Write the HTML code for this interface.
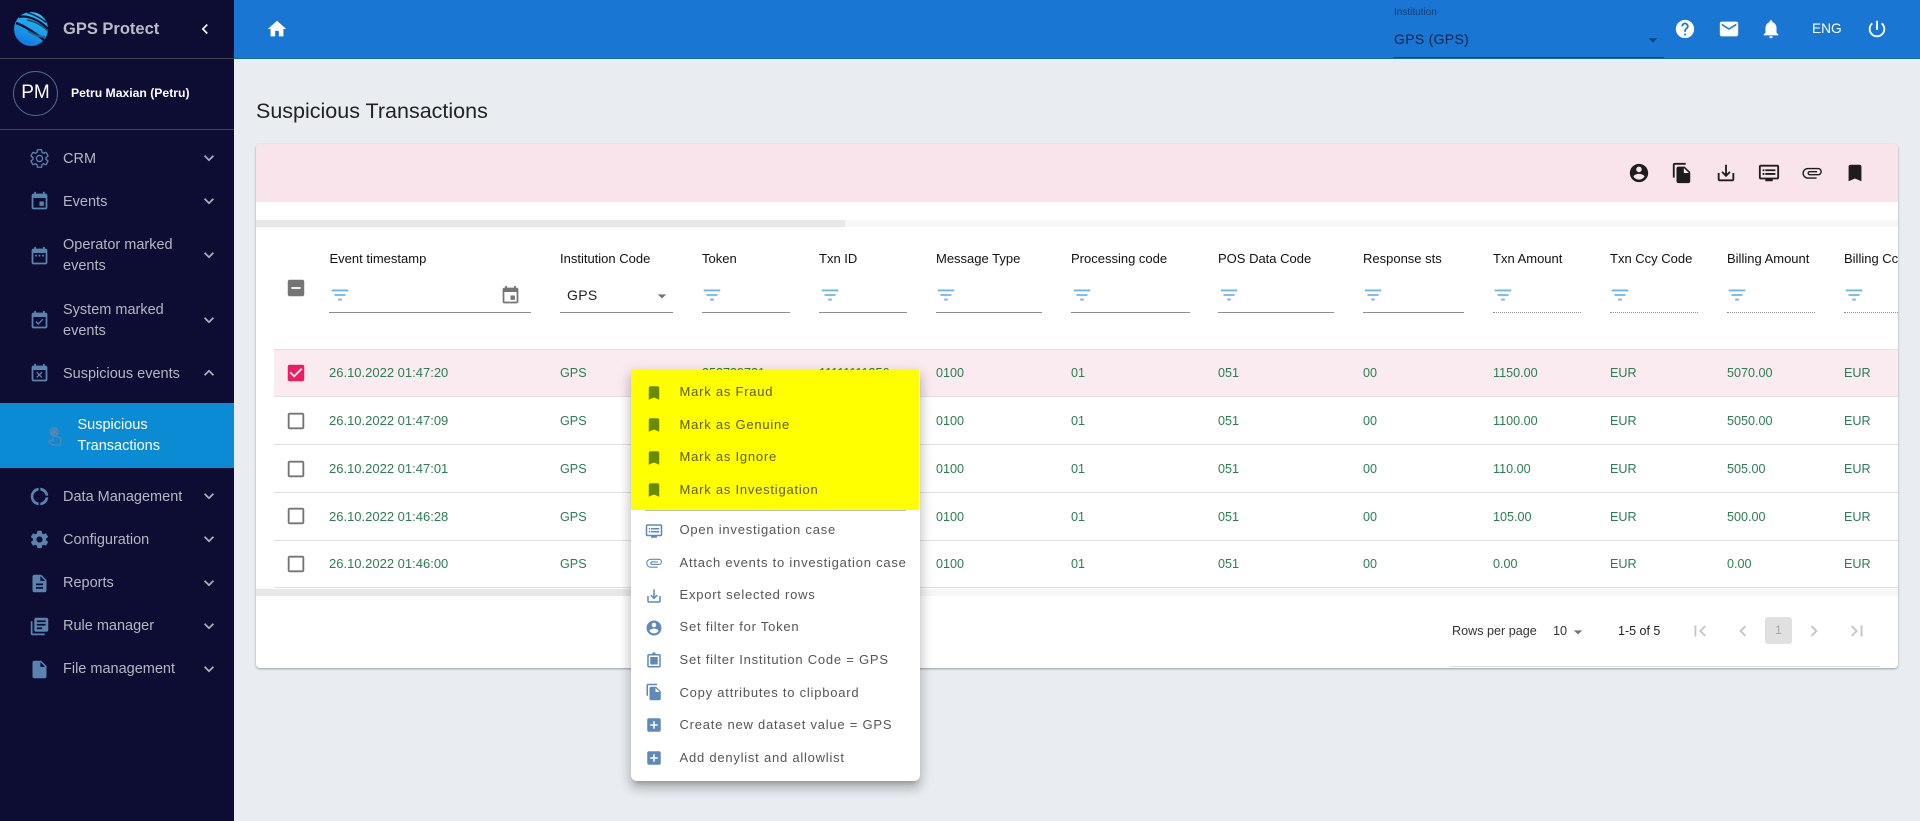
<!DOCTYPE html>
<html><head><meta charset="utf-8"><title>Suspicious Transactions</title>
<style>
*{box-sizing:border-box}
html,body{margin:0;padding:0}
body{width:1920px;height:821px;overflow:hidden;position:relative;background:#e9edf1;font-family:"Liberation Sans",sans-serif;color:#222}
.a{position:absolute}
.t{position:absolute;white-space:nowrap;line-height:16px}
svg{display:block;fill:currentColor}
#side{left:0;top:0;width:234px;height:821px;background:#0d0d33}
#top{left:234px;top:0;width:1686px;height:59px;background:#1976d2;border-bottom:1px solid #0e6ea8}
.hr{left:0;width:234px;height:1px;background:#45454f}
.ni{position:absolute;left:28.500px;width:21px;height:21px;color:#5a84ae}
.nt{position:absolute;left:63px;font-size:14.500px;line-height:21px;color:#b5b6c2;white-space:nowrap}
.nc{position:absolute;left:199px;width:20px;height:20px;color:#b0b0bb}
#card{left:256px;top:144px;width:1642px;height:524px;background:#fff;border-radius:4px;box-shadow:0 1px 2px rgba(0,0,0,.35);overflow:hidden}
.h{position:absolute;top:252px;font-size:13px;line-height:14px;color:#111;white-space:nowrap}
.u{position:absolute;top:312px;height:1px;background:#8f8f8f}
.d{position:absolute;top:312px;height:1px;border-top:1px dotted #8f8f8f}
.f{position:absolute;top:284px;width:22px;height:22px;color:#6db6e6}
.row{position:absolute;left:274px;width:1624px;height:48px;border-bottom:1px solid #e0e0e0;overflow:hidden}
.c{position:absolute;top:16px;font-size:12.600px;line-height:16px;color:#2a7d55;white-space:nowrap}
.r1 .c{top:15px}
.c1{left:55px;font-size:13px}.c2{left:286px}.c3{left:428px}.c4{left:545px}.c5{left:662px}.c6{left:797px}.c7{left:944px}.c8{left:1089px}.c9{left:1219px}.c10{left:1336px}.c11{left:1453px}.c12{left:1570px}
.cb{position:absolute;left:285px;width:22px;height:22px;color:#757575}
.ti{position:absolute;top:162px;width:22px;height:22px;color:#1d1d1d}
#menu{left:631px;top:370px;width:289px;height:411px;background:#fff;border-radius:0 0 6px 6px;box-shadow:0 5px 5px -3px rgba(0,0,0,.2),0 8px 10px 1px rgba(0,0,0,.14),0 3px 14px 2px rgba(0,0,0,.12)}
.mi{position:absolute;left:14px;width:18px;height:18px;color:#5f8ab6}
.mt{position:absolute;left:48.500px;font-size:13px;line-height:16px;letter-spacing:.77px;color:#555;white-space:nowrap}
.y .mi{color:#6b8a00}.y .mt{color:#5c5c12}
.pg{position:absolute;top:620px;width:22px;height:22px;color:#c4c4c4}
.wi{position:absolute;top:18px;width:22px;height:22px;color:#fff}
</style></head><body>
<svg width="0" height="0" style="position:absolute">
<symbol id="i-more" viewBox="0 0 24 24"><path d="M16.590 8.590L12 13.170 7.410 8.590 6 10l6 6 6-6z"/></symbol>
<symbol id="i-less" viewBox="0 0 24 24"><path d="M12 8l-6 6 1.410 1.410L12 10.830l4.590 4.580L18 14z"/></symbol>
<symbol id="i-filter" viewBox="0 0 24 24"><path d="M10 18h4v-2h-4v2zM3 6v2h18V6H3zm3 7h12v-2H6v2z"/></symbol>
<symbol id="i-box" viewBox="0 0 24 24"><path d="M19 5v14H5V5h14m0-2H5c-1.100 0-2 .9-2 2v14c0 1.100.9 2 2 2h14c1.100 0 2-.9 2-2V5c0-1.100-.9-2-2-2z"/></symbol>
<symbol id="i-book" viewBox="0 0 24 24"><path d="M17 3H7c-1.100 0-1.990.9-1.990 2L5 21l7-3 7 3V5c0-1.100-.9-2-2-2z"/></symbol>
<symbol id="i-add" viewBox="0 0 24 24"><path d="M19 3H5c-1.110 0-2 .9-2 2v14c0 1.100.89 2 2 2h14c1.100 0 2-.9 2-2V5c0-1.100-.9-2-2-2zm-2 10h-4v4h-2v-4H7v-2h4V7h2v4h4v2z"/></symbol>
<symbol id="i-acc" viewBox="0 0 24 24"><path d="M12 2C6.480 2 2 6.480 2 12s4.480 10 10 10 10-4.480 10-10S17.520 2 12 2zm0 3c1.660 0 3 1.340 3 3s-1.340 3-3 3-3-1.340-3-3 1.340-3 3-3zm0 14.200c-2.500 0-4.710-1.280-6-3.220.03-1.990 4-3.080 6-3.080 1.990 0 5.970 1.090 6 3.080-1.290 1.940-3.500 3.220-6 3.220z"/></symbol>
<symbol id="i-copy" viewBox="0 0 24 24"><path d="M16 1H4c-1.100 0-2 .9-2 2v14h2V3h12V1zm-1 4l6 6v10c0 1.100-.9 2-2 2H7.990C6.890 23 6 22.100 6 21l.01-14c0-1.100.89-2 1.990-2h7zm-1 7h5.500L14 6.500V12z"/></symbol>
<symbol id="i-down" viewBox="0 0 24 24"><path d="M19 12v7H5v-7H3v7c0 1.100.9 2 2 2h14c1.100 0 2-.9 2-2v-7h-2zm-6 .670l2.590-2.580L17 11.500l-5 5-5-5 1.410-1.410L11 12.670V3h2z"/></symbol>
<symbol id="i-dvr" viewBox="0 0 24 24"><path d="M21 3H3c-1.100 0-2 .9-2 2v12c0 1.100.9 2 2 2h5v2h8v-2h5c1.100 0 1.990-.9 1.990-2L23 5c0-1.100-.9-2-2-2zm0 14H3V5h18v12zm-2-9H8v2h11V8zm0 4H8v2h11v-2zM7 8H5v2h2V8zm0 4H5v2h2v-2z"/></symbol>
<symbol id="i-att" viewBox="0 0 24 24"><path fill="none" stroke="currentColor" stroke-width="1.500" d="M17 17.500H7.500a5.200 5.200 0 0 1 0-10.400H18.600a3.400 3.400 0 0 1 0 6.800H9.500a1.700 1.700 0 0 1 0-3.400H17.500"/></symbol>
<symbol id="i-gear" viewBox="0 0 24 24"><path d="M19.430 12.980c.04-.32.07-.64.07-.98 0-.34-.03-.66-.07-.98l2.110-1.650c.19-.15.24-.42.12-.64l-2-3.460c-.12-.22-.39-.3-.61-.22l-2.490 1c-.52-.4-1.080-.73-1.690-.98l-.38-2.650C14.460 2.180 14.250 2 14 2h-4c-.25 0-.46.18-.49.42l-.38 2.650c-.61.25-1.170.59-1.690.98l-2.490-1c-.23-.09-.49 0-.61.22l-2 3.460c-.13.22-.07.49.12.64l2.110 1.650c-.04.32-.07.65-.07.98 0 .33.03.66.07.98l-2.110 1.650c-.19.15-.24.42-.12.64l2 3.460c.12.22.39.3.61.22l2.490-1c.52.4 1.080.73 1.690.98l.38 2.650c.03.24.24.42.49.42h4c.25 0 .46-.18.49-.42l.38-2.650c.61-.25 1.170-.59 1.690-.98l2.490 1c.23.09.49 0 .61-.22l2-3.460c.12-.22.07-.49-.12-.64l-2.110-1.650zM12 15.500c-1.930 0-3.500-1.570-3.500-3.500s1.570-3.500 3.500-3.500 3.500 1.570 3.500 3.500-1.570 3.500-3.500 3.500z"/></symbol>
</svg>

<div id="top" class="a"></div>
<svg class="a" style="left:266px;top:18px;color:#fff" width="22" height="22" viewBox="0 0 24 24"><path d="M10 20v-6h4v6h5v-8h3L12 3 2 12h3v8z"/></svg>
<div class="t" style="left:1394px;top:6px;font-size:10px;line-height:14px;color:#123f6e">Institution</div>
<div class="t" style="left:1394px;top:31px;font-size:14px;letter-spacing:.3px;color:#0a2448">GPS (GPS)</div>
<div class="a" style="left:1394px;top:57px;width:270px;height:1px;background:#123f6e"></div>
<svg class="a" style="left:1643px;top:30px;color:#123f6e" width="20" height="20" viewBox="0 0 24 24"><path d="M7 10l5 5 5-5z"/></svg>
<svg class="wi" style="left:1674px" viewBox="0 0 24 24"><path d="M12 2C6.480 2 2 6.480 2 12s4.480 10 10 10 10-4.480 10-10S17.520 2 12 2zm1 17h-2v-2h2v2zm2.070-7.750l-.9.92C13.450 12.900 13 13.500 13 15h-2v-.5c0-1.100.45-2.100 1.170-2.830l1.240-1.260c.37-.36.59-.86.59-1.410 0-1.100-.9-2-2-2s-2 .9-2 2H8c0-2.210 1.790-4 4-4s4 1.790 4 4c0 .88-.36 1.680-.93 2.250z"/></svg>
<svg class="wi" style="left:1718px" viewBox="0 0 24 24"><path d="M20 4H4c-1.100 0-1.990.9-1.990 2L2 18c0 1.100.9 2 2 2h16c1.100 0 2-.9 2-2V6c0-1.100-.9-2-2-2zm0 4l-8 5-8-5V6l8 5 8-5v2z"/></svg>
<svg class="wi" style="left:1760px" viewBox="0 0 24 24"><path d="M12 22c1.100 0 2-.9 2-2h-4c0 1.100.89 2 2 2zm6-6v-5c0-3.070-1.640-5.640-4.500-6.320V4c0-.83-.67-1.500-1.500-1.500s-1.500.67-1.500 1.500v.68C7.630 5.360 6 7.920 6 11v5l-2 2v1h16v-1l-2-2z"/></svg>
<div class="t" style="left:1812px;top:21px;font-size:13.700px;color:#fff">ENG</div>
<svg class="wi" style="left:1866px" viewBox="0 0 24 24"><path d="M13 3h-2v10h2V3zm4.830 2.170l-1.420 1.420C17.990 7.860 19 9.810 19 12c0 3.870-3.130 7-7 7s-7-3.130-7-7c0-2.190 1.010-4.140 2.580-5.420L6.170 5.170C4.230 6.820 3 9.260 3 12c0 4.970 4.030 9 9 9s9-4.030 9-9c0-2.740-1.230-5.180-3.170-6.830z"/></svg>

<div id="side" class="a">
<svg class="a" style="left:13px;top:11px" width="36" height="36" viewBox="0 0 36 36">
<defs><linearGradient id="lg" x1="0.7" y1="0" x2="0.3" y2="1"><stop offset="0" stop-color="#2ac4f7"/><stop offset="1" stop-color="#0e78dc"/></linearGradient></defs>
<circle cx="18" cy="18" r="17" fill="url(#lg)"/>
<path d="M6 6 C14 4 27 9 35 18" fill="none" stroke="#0d0d33" stroke-width="2.200"/>
<path d="M14 1.500 C20 3 28 7 33 11.500" fill="none" stroke="#0d0d33" stroke-width="1.300"/>
<path d="M14 9 C21 10 29 14 35 20" fill="none" stroke="#1f4f70" stroke-width="1.800"/>
<path d="M3 12 C12 15 22 22 31 29" fill="none" stroke="#0d0d33" stroke-width="2.400"/>
<path d="M15 20 C20 23 25 26 32 26" fill="none" stroke="#2a5f86" stroke-width="2"/>
<path d="M23 35 C27 33.500 30 31 32.500 28 L36 36 Z" fill="#0d0d33"/>
</svg>
<div class="t" style="left:63px;top:20.500px;font-size:16.500px;font-weight:bold;color:#bcbcc6">GPS Protect</div>
<svg class="a" style="left:195px;top:19px;color:#fff" width="20" height="20" viewBox="0 0 24 24"><path d="M15.410 7.410L14 6l-6 6 6 6 1.410-1.410L10.830 12z"/></svg>
<div class="a hr" style="top:58px"></div>
<div class="a" style="left:13px;top:71px;width:45px;height:45px;border:1px solid #4d6a88;border-radius:50%"></div>
<div class="t" style="left:13px;top:82px;width:45px;text-align:center;line-height:22px;font-size:19px;color:#fff">PM</div>
<div class="t" style="left:71px;top:85px;font-size:12.200px;font-weight:bold;color:#fff">Petru Maxian (Petru)</div>
<div class="a hr" style="top:129px"></div>

<svg class="ni" style="top:147.500px" viewBox="0 0 24 24"><use href="#i-gear" fill="none" stroke="currentColor" stroke-width="1.500"/></svg>
<div class="nt" style="top:149px">CRM</div><svg class="nc" style="top:148px"><use href="#i-more"/></svg>

<svg class="ni" style="top:190.500px" viewBox="0 0 24 24"><path d="M17 12h-5v5h5v-5zM16 1v2H8V1H6v2H5c-1.110 0-1.990.9-1.990 2L3 19c0 1.100.89 2 2 2h14c1.100 0 2-.9 2-2V5c0-1.100-.9-2-2-2h-1V1h-2zm3 18H5V8h14v11z"/></svg>
<div class="nt" style="top:192px">Events</div><svg class="nc" style="top:191px"><use href="#i-more"/></svg>

<svg class="ni" style="top:245.500px" viewBox="0 0 24 24"><path d="M9 10H7v2h2v-2zm4 0h-2v2h2v-2zm4 0h-2v2h2v-2zm2-7h-1V1h-2v2H8V1H6v2H5c-1.110 0-1.990.9-1.990 2L3 19c0 1.100.89 2 2 2h14c1.100 0 2-.9 2-2V5c0-1.100-.9-2-2-2zm0 16H5V8h14v11z"/></svg>
<div class="nt" style="top:235px">Operator marked<br>events</div><svg class="nc" style="top:245px"><use href="#i-more"/></svg>

<svg class="ni" style="top:309.500px" viewBox="0 0 24 24"><path d="M16.530 11.060L15.470 10l-4.880 4.880-2.120-2.120-1.060 1.060L10.590 17l5.940-5.940zM19 3h-1V1h-2v2H8V1H6v2H5c-1.110 0-1.990.9-1.990 2L3 19c0 1.100.89 2 2 2h14c1.100 0 2-.9 2-2V5c0-1.100-.9-2-2-2zm0 16H5V8h14v11z"/></svg>
<div class="nt" style="top:300px">System marked<br>events</div><svg class="nc" style="top:310px"><use href="#i-more"/></svg>

<svg class="ni" style="top:362.500px" viewBox="0 0 24 24"><path d="M9.310 17l2.440-2.440L14.190 17l1.060-1.060-2.440-2.440 2.440-2.440L14.190 10l-2.440 2.440L9.310 10l-1.060 1.060 2.440 2.440-2.440 2.440L9.310 17zM19 3h-1V1h-2v2H8V1H6v2H5c-1.110 0-1.990.9-1.990 2L3 19c0 1.100.89 2 2 2h14c1.100 0 2-.9 2-2V5c0-1.100-.9-2-2-2zm0 16H5V8h14v11z"/></svg>
<div class="nt" style="top:364px">Suspicious events</div><svg class="nc" style="top:363px"><use href="#i-less"/></svg>

<div class="a" style="left:0;top:403px;width:234px;height:65px;background:#0a8bd3"></div>
<svg class="a" style="left:43.500px;top:424.500px;color:#4f87b5" width="21" height="21" viewBox="0 0 24 24"><path fill="none" stroke="currentColor" stroke-width="1.700" d="M9 11.240V7.500a2.500 2.500 0 0 1 5 0v3.740c1.210-.81 2-2.180 2-3.740a4.500 4.500 0 0 0-9 0c0 1.560.79 2.930 2 3.740zM11.500 6.500c-.6 0-1 .5-1 1v10.700l-3.900-.7-1.400 1.200 4.400 4.300h7.600c.7 0 1.200-.5 1.300-1.200l.8-5.300c.1-.7-.3-1.300-.9-1.600l-4.500-2.200h-1.900V7.500c0-.5-.4-1-1-1z"/></svg>
<div class="nt" style="left:77.500px;top:415px;color:#fff">Suspicious<br>Transactions</div>

<svg class="ni" style="top:486px" viewBox="0 0 24 24"><path d="M11 5.080V2c-5 .5-9 4.810-9 10s4 9.500 9 10v-3.080c-3-.48-6-3.190-6-6.920s3-6.440 6-6.920zM18.970 11H22c-.47-5-4-8.530-9-9v3.080C16 5.510 18.540 8 18.970 11zM13 18.920V22c5-.47 8.530-4 9-9h-3.030c-.43 3-2.970 5.490-5.970 5.920z"/></svg>
<div class="nt" style="top:487px">Data Management</div><svg class="nc" style="top:486px"><use href="#i-more"/></svg>

<svg class="ni" style="top:529px" viewBox="0 0 24 24"><use href="#i-gear"/></svg>
<div class="nt" style="top:530px">Configuration</div><svg class="nc" style="top:529px"><use href="#i-more"/></svg>

<svg class="ni" style="top:572.500px" viewBox="0 0 24 24"><path d="M14 2H6c-1.100 0-1.990.9-1.990 2L4 20c0 1.100.89 2 1.990 2H18c1.100 0 2-.9 2-2V8l-6-6zm2 16H8v-2h8v2zm0-4H8v-2h8v2zm-3-5V3.500L18.500 9H13z"/></svg>
<div class="nt" style="top:573px">Reports</div><svg class="nc" style="top:573px"><use href="#i-more"/></svg>

<svg class="ni" style="top:615.500px" viewBox="0 0 24 24"><path d="M4 6H2v14c0 1.100.9 2 2 2h14v-2H4V6zm16-4H8c-1.100 0-2 .9-2 2v12c0 1.100.9 2 2 2h12c1.100 0 2-.9 2-2V4c0-1.100-.9-2-2-2zm-1 9H9V9h10v2zm-4 4H9v-2h6v2zm4-8H9V5h10v2z"/></svg>
<div class="nt" style="top:616px">Rule manager</div><svg class="nc" style="top:616px"><use href="#i-more"/></svg>

<svg class="ni" style="top:658.500px" viewBox="0 0 24 24"><path d="M6 2c-1.100 0-1.990.9-1.990 2L4 20c0 1.100.89 2 1.990 2H18c1.100 0 2-.9 2-2V8l-6-6H6zm7 7V3.500L18.500 9H13z"/></svg>
<div class="nt" style="top:659px">File management</div><svg class="nc" style="top:659px"><use href="#i-more"/></svg>
</div>

<div class="t" style="left:256px;top:97.500px;font-size:21.500px;line-height:26px;color:#222">Suspicious Transactions</div>

<div id="card" class="a"></div>
<div class="a" style="left:256px;top:144px;width:1642px;height:58px;background:#f9e4ec;border-radius:4px 4px 0 0"></div>
<svg class="ti" style="left:1628px"><use href="#i-acc"/></svg>
<svg class="ti" style="left:1671px"><use href="#i-copy"/></svg>
<svg class="ti" style="left:1715px"><use href="#i-down"/></svg>
<svg class="ti" style="left:1758px"><use href="#i-dvr"/></svg>
<svg class="ti" style="left:1801px"><use href="#i-att"/></svg>
<svg class="ti" style="left:1844px"><use href="#i-book"/></svg>

<div class="a" style="left:256px;top:220px;width:1642px;height:7px;background:#f7f7f7"></div>
<div class="a" style="left:256px;top:220px;width:589px;height:7px;background:#e8e8e8"></div>

<svg class="cb" style="top:277px" viewBox="0 0 24 24"><path d="M19 3H5c-1.100 0-2 .9-2 2v14c0 1.100.9 2 2 2h14c1.100 0 2-.9 2-2V5c0-1.100-.9-2-2-2zm-2 10H7v-2h10v2z"/></svg>

<div class="h" style="left:329.500px">Event timestamp</div>
<div class="h" style="left:560px">Institution Code</div>
<div class="h" style="left:702px">Token</div>
<div class="h" style="left:819px">Txn ID</div>
<div class="h" style="left:936px">Message Type</div>
<div class="h" style="left:1071px">Processing code</div>
<div class="h" style="left:1218px">POS Data Code</div>
<div class="h" style="left:1363px">Response sts</div>
<div class="h" style="left:1493px">Txn Amount</div>
<div class="h" style="left:1610px">Txn Ccy Code</div>
<div class="h" style="left:1727px">Billing Amount</div>
<div class="h" style="width:54px;overflow:hidden;left:1844px">Billing Ccy Code</div>

<svg class="f" style="left:329px"><use href="#i-filter"/></svg>
<svg class="f" style="left:701px"><use href="#i-filter"/></svg>
<svg class="f" style="left:818.500px"><use href="#i-filter"/></svg>
<svg class="f" style="left:935px"><use href="#i-filter"/></svg>
<svg class="f" style="left:1071px"><use href="#i-filter"/></svg>
<svg class="f" style="left:1218px"><use href="#i-filter"/></svg>
<svg class="f" style="left:1362px"><use href="#i-filter"/></svg>
<svg class="f" style="left:1492px"><use href="#i-filter"/></svg>
<svg class="f" style="left:1609px"><use href="#i-filter"/></svg>
<svg class="f" style="left:1726px"><use href="#i-filter"/></svg>
<svg class="f" style="left:1843px"><use href="#i-filter"/></svg>

<svg class="a" style="left:499.500px;top:284.500px;color:#757575" width="21" height="21" viewBox="0 0 24 24"><path d="M17 12h-5v5h5v-5zM16 1v2H8V1H6v2H5c-1.110 0-1.990.9-1.990 2L3 19c0 1.100.89 2 2 2h14c1.100 0 2-.9 2-2V5c0-1.100-.9-2-2-2h-1V1h-2zm3 18H5V8h14v11z"/></svg>
<div class="t" style="left:567px;top:287px;font-size:14px;letter-spacing:.3px;color:#222">GPS</div>
<svg class="a" style="left:652px;top:286px;color:#757575" width="20" height="20" viewBox="0 0 24 24"><path d="M7 10l5 5 5-5z"/></svg>

<div class="u" style="left:329px;width:202px"></div>
<div class="u" style="left:560px;width:113px"></div>
<div class="u" style="left:702px;width:88px"></div>
<div class="u" style="left:819px;width:88px"></div>
<div class="u" style="left:936px;width:106px"></div>
<div class="u" style="left:1071px;width:119px"></div>
<div class="u" style="left:1218px;width:116px"></div>
<div class="u" style="left:1363px;width:101px"></div>
<div class="d" style="left:1493px;width:88px"></div>
<div class="d" style="left:1610px;width:88px"></div>
<div class="d" style="left:1727px;width:88px"></div>
<div class="d" style="left:1844px;width:54px"></div>

<div class="a" style="left:274px;top:349px;width:1624px;height:1px;background:#e0e0e0"></div>
<div class="row r1" style="top:350px;height:47px;background:#faebf0">
<span class="c c1">26.10.2022 01:47:20</span><span class="c c2">GPS</span><span class="c c3">352739731</span><span class="c c4">11111111356</span><span class="c c5">0100</span><span class="c c6">01</span><span class="c c7">051</span><span class="c c8">00</span><span class="c c9">1150.00</span><span class="c c10">EUR</span><span class="c c11">5070.00</span><span class="c c12">EUR</span></div>
<div class="row" style="top:397px">
<span class="c c1">26.10.2022 01:47:09</span><span class="c c2">GPS</span><span class="c c5">0100</span><span class="c c6">01</span><span class="c c7">051</span><span class="c c8">00</span><span class="c c9">1100.00</span><span class="c c10">EUR</span><span class="c c11">5050.00</span><span class="c c12">EUR</span></div>
<div class="row" style="top:445px">
<span class="c c1">26.10.2022 01:47:01</span><span class="c c2">GPS</span><span class="c c5">0100</span><span class="c c6">01</span><span class="c c7">051</span><span class="c c8">00</span><span class="c c9">110.00</span><span class="c c10">EUR</span><span class="c c11">505.00</span><span class="c c12">EUR</span></div>
<div class="row" style="top:493px">
<span class="c c1">26.10.2022 01:46:28</span><span class="c c2">GPS</span><span class="c c5">0100</span><span class="c c6">01</span><span class="c c7">051</span><span class="c c8">00</span><span class="c c9">105.00</span><span class="c c10">EUR</span><span class="c c11">500.00</span><span class="c c12">EUR</span></div>
<div class="row" style="top:540px">
<span class="c c1">26.10.2022 01:46:00</span><span class="c c2">GPS</span><span class="c c5">0100</span><span class="c c6">01</span><span class="c c7">051</span><span class="c c8">00</span><span class="c c9">0.00</span><span class="c c10">EUR</span><span class="c c11">0.00</span><span class="c c12">EUR</span></div>

<svg class="cb" style="top:362px;color:#e91e63" viewBox="0 0 24 24"><path d="M19 3H5c-1.100 0-2 .9-2 2v14c0 1.100.9 2 2 2h14c1.100 0 2-.9 2-2V5c0-1.100-.9-2-2-2zm-9 14l-5-5 1.410-1.410L10 14.170l7.590-7.590L19 8l-9 9z"/></svg>
<svg class="cb" style="top:410px"><use href="#i-box"/></svg>
<svg class="cb" style="top:458px"><use href="#i-box"/></svg>
<svg class="cb" style="top:505px"><use href="#i-box"/></svg>
<svg class="cb" style="top:553px"><use href="#i-box"/></svg>

<div class="a" style="left:256px;top:589px;width:1642px;height:7px;background:#f7f7f7"></div>
<div class="a" style="left:256px;top:589px;width:376px;height:7px;background:#e8e8e8"></div>

<div class="t" style="left:1452px;top:623px;font-size:12.600px;color:#333">Rows per page</div>
<div class="t" style="left:1553px;top:623px;font-size:12.700px;color:#333">10</div>
<svg class="a" style="left:1567.500px;top:622px;color:#757575" width="20" height="20" viewBox="0 0 24 24"><path d="M7 10l5 5 5-5z"/></svg>
<div class="t" style="left:1618px;top:623px;font-size:12.500px;color:#222">1-5 of 5</div>
<svg class="pg" style="left:1689px" viewBox="0 0 24 24"><path d="M18.410 16.590L13.820 12l4.590-4.590L17 6l-6 6 6 6zM6 6h2v12H6z"/></svg>
<svg class="pg" style="left:1732px" viewBox="0 0 24 24"><path d="M15.410 7.410L14 6l-6 6 6 6 1.410-1.410L10.830 12z"/></svg>
<div class="a" style="left:1765px;top:617px;width:27px;height:27px;background:#e0e0e0;border-radius:3px;text-align:center;font-size:12px;line-height:27px;color:#a8a8a8">1</div>
<svg class="pg" style="left:1803px" viewBox="0 0 24 24"><path d="M10 6L8.590 7.410 13.170 12l-4.580 4.590L10 18l6-6z"/></svg>
<svg class="pg" style="left:1846px" viewBox="0 0 24 24"><path d="M5.590 7.410L10.180 12l-4.590 4.590L7 18l6-6-6-6zM16 6h2v12h-2z"/></svg>
<div class="a" style="left:1451px;top:666px;width:429px;height:1px;background:#e0e0e0"></div>

<div id="menu" class="a">
<div class="y a" style="left:0;top:0;width:288px;height:140px;background:#ff0">
<svg class="mi" style="top:13.500px"><use href="#i-book"/></svg><div class="mt" style="top:14px">Mark as Fraud</div>
<svg class="mi" style="top:46px"><use href="#i-book"/></svg><div class="mt" style="top:47px">Mark as Genuine</div>
<svg class="mi" style="top:78.500px"><use href="#i-book"/></svg><div class="mt" style="top:79px">Mark as Ignore</div>
<svg class="mi" style="top:111px"><use href="#i-book"/></svg><div class="mt" style="top:112px">Mark as Investigation</div>
</div>
<div class="a" style="left:14px;top:140px;width:261px;height:1px;background:#bdbdbd"></div>
<svg class="mi" style="top:152px"><use href="#i-dvr"/></svg><div class="mt" style="top:152px">Open investigation case</div>
<svg class="mi" style="top:184px"><use href="#i-att"/></svg><div class="mt" style="top:185px">Attach events to investigation case</div>
<svg class="mi" style="top:217px"><use href="#i-down"/></svg><div class="mt" style="top:217px">Export selected rows</div>
<svg class="mi" style="top:249px"><use href="#i-acc"/></svg><div class="mt" style="top:249px">Set filter for Token</div>
<svg class="mi" style="top:281px" viewBox="0 0 24 24"><path fill-rule="evenodd" d="M5 4h4.200L12 1l2.800 3H19c1.100 0 2 .9 2 2v14c0 1.100-.9 2-2 2H5c-1.100 0-2-.9-2-2V6c0-1.100.9-2 2-2zm0 2v14h14V6H5zm2 2h10v10H7V8z"/></svg><div class="mt" style="top:282px">Set filter Institution Code = GPS</div>
<svg class="mi" style="top:313px"><use href="#i-copy"/></svg><div class="mt" style="top:315px">Copy attributes to clipboard</div>
<svg class="mi" style="top:346px"><use href="#i-add"/></svg><div class="mt" style="top:347px">Create new dataset value = GPS</div>
<svg class="mi" style="top:379px"><use href="#i-add"/></svg><div class="mt" style="top:380px">Add denylist and allowlist</div>
</div>
</body></html>
